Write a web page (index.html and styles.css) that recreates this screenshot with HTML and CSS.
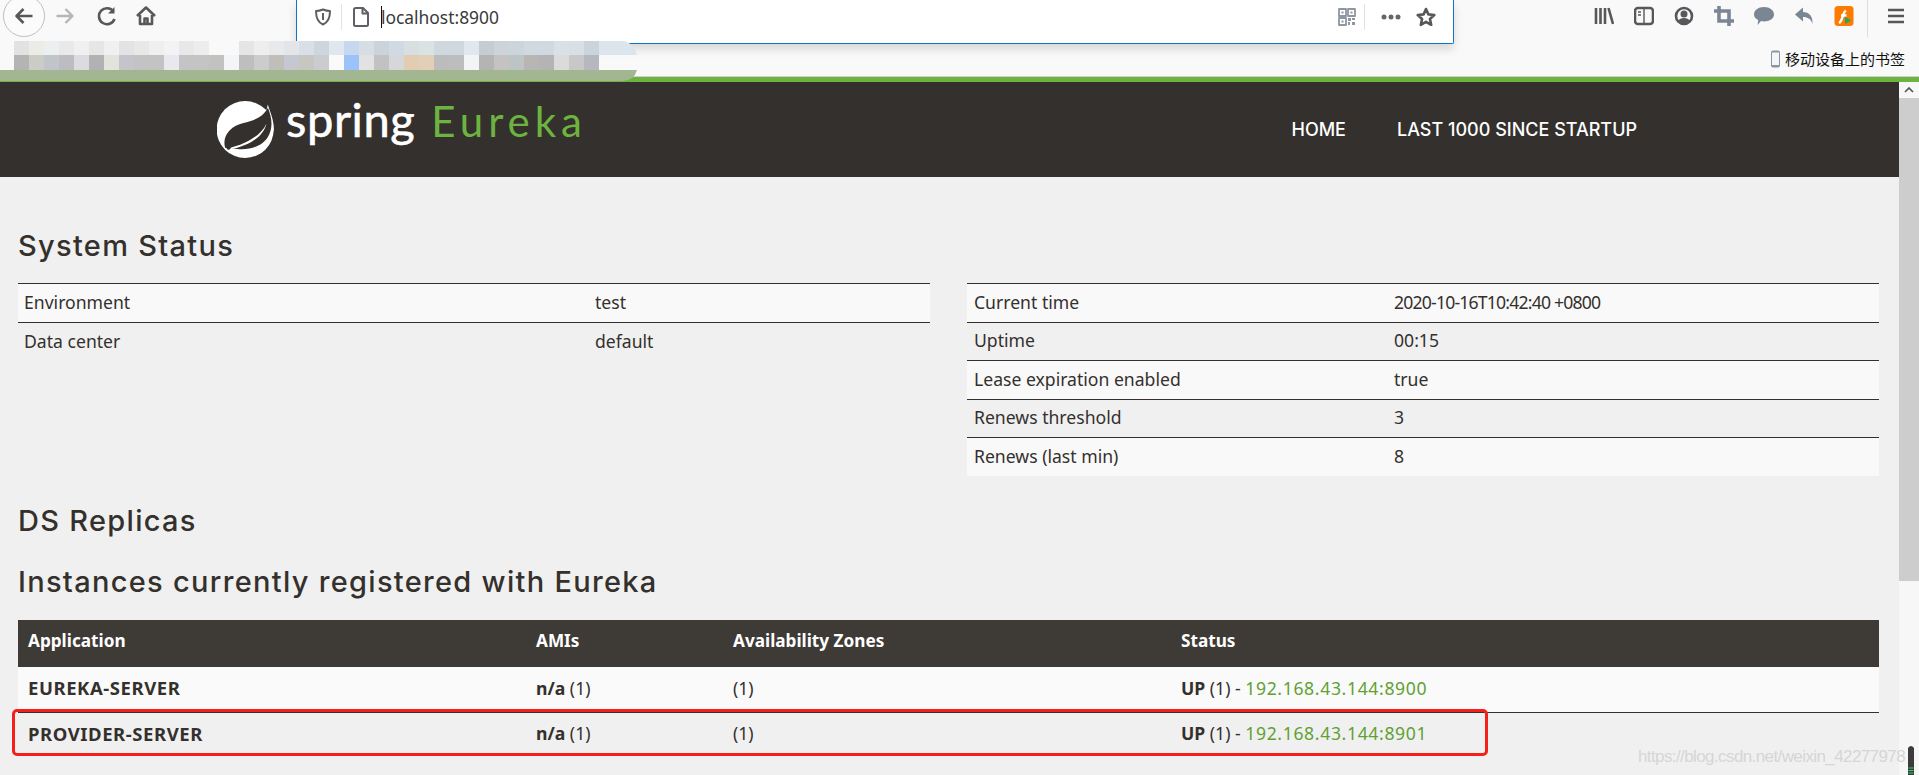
FILE: index.html
```html
<!DOCTYPE html>
<html lang="en">
<head>
<meta charset="utf-8">
<title>Eureka</title>
<link rel="stylesheet" href="styles.css">
</head>
<body>
<div class="chrome">
  <div class="toolbar">
    <div class="nav-icons">
      <span class="back-ring"><svg class="ic20" viewBox="0 0 20 20"><path d="M18.5 10H2.5M9.5 3L2.5 10L9.5 17" class="st-dark"/></svg></span>
      <svg class="ic20 fwd" viewBox="0 0 20 20"><path d="M1.5 10H17.5M10.5 3L17.5 10L10.5 17" class="st-light"/></svg>
      <svg class="ic20 reload" viewBox="0 0 20 20"><path d="M16.5 5.5A8 8 0 1 0 17.5 13" class="st-dark"/><path d="M17.5 1V7.5H11Z" class="fill-dark"/></svg>
      <svg class="ic20 home" viewBox="0 0 20 20"><path d="M1 10L10 1.5L19 10" class="st-dark"/><path d="M4 9V18H16V9M8.5 18V12.5H11.5V18" class="st-dark"/></svg>
    </div>
    <div class="urlbar">
      <svg class="ic18 shield" viewBox="0 0 18 18"><path d="M9 1.5C11.5 2.5 14 3 16 3C16 10 14 14.5 9 16.5C4 14.5 2 10 2 3C4 3 6.5 2.5 9 1.5Z" class="st-mid"/><path d="M9 5V12" class="st-mid"/></svg>
      <span class="vsep"></span>
      <svg class="ic20 doc" viewBox="0 0 20 20"><path d="M3 2.5A1.5 1.5 0 0 1 4.500 1H12L17 6V17.5A1.500 1.500 0 0 1 15.500 19H4.500A1.500 1.500 0 0 1 3 17.500ZM11.500 1.500V6.500H16.500" class="st-mid"/></svg>
      <span class="caret"></span>
      <span class="url">localhost:8900</span>
      <svg class="ic18 qr" viewBox="0 0 18 18"><path d="M1 1H8V8H1ZM10 1H17V8H10ZM1 10H8V17H1Z" class="st-qr"/><path d="M10 10H13V13H10ZM14 14H17V17H14ZM14 10H17V12H14ZM10 14H12V17H10ZM3.500 3.500H5.500V5.500H3.500ZM12.500 3.500H14.500V5.500H12.500ZM3.500 12.500H5.500V14.500H3.500Z" class="fill-qr"/></svg>
      <span class="vsep vsep-right"></span>
      <svg class="dots" viewBox="0 0 20 6"><circle cx="3" cy="3" r="2.500"/><circle cx="10" cy="3" r="2.500"/><circle cx="17" cy="3" r="2.500"/></svg>
      <svg class="ic20 star" viewBox="0 0 20 20"><path d="M10 2L12.400 7.400L18.300 8L13.900 12L15.200 17.800L10 14.800L4.800 17.800L6.100 12L1.700 8L7.600 7.400Z" class="st-dark"/></svg>
    </div>
    <div class="tool-icons">
      <svg class="ic20" viewBox="0 0 20 20"><path d="M2 2V18M6.500 2V18M11 2V18M14.500 2L19 18" class="st-dark"/></svg>
      <svg class="ic20" viewBox="0 0 20 20"><rect x="1" y="2" width="18" height="16" rx="3" class="st-dark"/><path d="M10 2V18M4 6H7M4 9H7" class="st-thin"/></svg>
      <svg class="ic20" viewBox="0 0 20 20"><circle cx="10" cy="10" r="8" class="st-dark"/><circle cx="10" cy="8" r="3.500" class="fill-dark"/><path d="M4 15C6 11 14 11 16 15L10 18Z" class="fill-dark"/></svg>
      <svg class="ic20" viewBox="0 0 20 20"><path d="M5 0V15H20M0 5H15V20" class="st-gray"/></svg>
      <svg class="ic20" viewBox="0 0 20 20"><path d="M10 1C15.800 1 20 4.200 20 8.500C20 12.500 15.800 15.500 10 15.500C9 15.500 8 15.400 7 15.100L3.500 19L4.200 14C1.800 12.800 0 10.800 0 8.500C0 4.200 4.200 1 10 1Z" class="fill-gray"/></svg>
      <svg class="ic20" viewBox="0 0 20 20"><path d="M9 1.500V6C15 6 19 10 18.500 18C17 13 14 11 9 11V15.500L1 8.500Z" class="fill-gray"/></svg>
      <svg class="ic20" viewBox="0 0 20 20"><rect x="0.500" y="0" width="19" height="20" rx="3.500" fill="#ff7a00"/><path d="M5 17C9 15 8 7 12 4.500M7 9.500H12.500" stroke="#fff" stroke-width="2.400" fill="none"/><path d="M11 10.500L17 14.500L11 18Z" fill="#20a860"/></svg>
      <span class="vsep vsep-tall"></span>
      <svg class="burger" viewBox="0 0 16 16"><path d="M0 2H16M0 8H16M0 14H16" class="st-dark"/></svg>
    </div>
  </div>
  <div class="bookmarks">
    <svg class="phone" viewBox="0 0 10 18"><rect x="0.500" y="0.500" width="9" height="17" rx="2" fill="#8b95a1"/><rect x="1.500" y="2.500" width="7" height="12.500" fill="#f4f6f8"/></svg>
    <span class="bm-text">移动设备上的书签</span>
  </div>
</div>
<div class="accent"></div>
<div class="viewport">
  <main class="page">
    <header class="navbar">
      <svg class="logo" viewBox="22 22 168 168">
        <circle cx="105" cy="106" r="84" fill="#fff"/>
        <path d="M150 10L195 10V60L185 60C178 50 176 42 172 36C165 40 158 30 150 10Z" fill="#34302d"/>
        <path d="M172 32C178 55 190 75 189 105C187 125 178 140 165 155L160 130L165 60Z" fill="#fff"/>
        <path d="M46 160C36 125 62 96 100 87C130 80 158 70 172 42C184 72 188 100 172 128C158 152 125 166 88 164C72 163 60 162 46 160Z" fill="#34302d"/>
        <path d="M62 160C100 150 150 128 168 88C160 124 120 154 62 164Z" fill="#fff"/>
        <circle cx="56" cy="160" r="6" fill="#34302d"/>
      </svg>
      <div class="brand"><span class="brand-spring">spring</span><span class="brand-eureka">Eureka</span></div>
      <nav class="menu"><a>HOME</a><a>LAST 1000 SINCE STARTUP</a></nav>
    </header>
    <section class="content">
      <h1 class="h-status">System Status</h1>
      <div class="two-col">
        <table class="kv kv-left">
          <tr><td class="k">Environment</td><td>test</td></tr>
          <tr><td class="k">Data center</td><td>default</td></tr>
        </table>
        <table class="kv kv-right">
          <tr><td class="k">Current time</td><td class="time">2020-10-16T10:42:40 +0800</td></tr>
          <tr><td class="k">Uptime</td><td>00:15</td></tr>
          <tr><td class="k">Lease expiration enabled</td><td>true</td></tr>
          <tr><td class="k">Renews threshold</td><td>3</td></tr>
          <tr><td class="k">Renews (last min)</td><td>8</td></tr>
        </table>
      </div>
      <h1 class="h-ds">DS Replicas</h1>
      <h1 class="h-inst">Instances currently registered with Eureka</h1>
      <table class="apps">
        <thead><tr><th class="c1">Application</th><th class="c2">AMIs</th><th class="c3">Availability Zones</th><th>Status</th></tr></thead>
        <tbody>
          <tr class="odd"><td><b class="name">EUREKA-SERVER</b></td><td><b>n/a</b> (1)</td><td>(1)</td><td><b>UP</b> (1) - <a class="ip">192.168.43.144:8900</a></td></tr>
          <tr><td><b class="name">PROVIDER-SERVER</b></td><td><b>n/a</b> (1)</td><td>(1)</td><td><b>UP</b> (1) - <a class="ip">192.168.43.144:8901</a></td></tr>
        </tbody>
      </table>
    </section>
  </main>
  <aside class="scrollbar">
    <div class="sb-arrow"><svg viewBox="0 0 10 6" class="sb-chev"><path d="M1 5L5 1L9 5" fill="none" stroke="#505050" stroke-width="1.600"/></svg></div>
    <div class="sb-thumb"></div>
  </aside>
</div>

<svg class="mosaic" viewBox="0 41 640 41" shape-rendering="crispEdges">
  <g>
    <path d="M0 70H637Q634 81 622 81H0Z" fill="#a3b692" shape-rendering="auto"/>
    <path d="M599 41H624Q634 43 637 55H599Z" fill="#dde5ec" shape-rendering="auto"/>
    <rect x="14" y="41" width="15" height="14" fill="#e2e2e2"/><rect x="29" y="41" width="15" height="14" fill="#ebebe8"/><rect x="44" y="41" width="15" height="14" fill="#eceef0"/><rect x="59" y="41" width="15" height="14" fill="#e8e9eb"/><rect x="74" y="41" width="15" height="14" fill="#f0f0f0"/><rect x="89" y="41" width="15" height="14" fill="#e6e6e6"/><rect x="104" y="41" width="15" height="14" fill="#f0f0f0"/><rect x="119" y="41" width="15" height="14" fill="#e3e3e6"/><rect x="134" y="41" width="15" height="14" fill="#e8e8e8"/><rect x="149" y="41" width="15" height="14" fill="#efefef"/><rect x="164" y="41" width="15" height="14" fill="#f3f3f5"/><rect x="179" y="41" width="15" height="14" fill="#e8e8e8"/><rect x="194" y="41" width="15" height="14" fill="#ededed"/>
    <rect x="239" y="41" width="15" height="14" fill="#e5e5e5"/><rect x="254" y="41" width="15" height="14" fill="#eeeeee"/><rect x="269" y="41" width="15" height="14" fill="#e8e9ea"/><rect x="284" y="41" width="15" height="14" fill="#e4e5e8"/><rect x="299" y="41" width="15" height="14" fill="#d8dfe6"/><rect x="314" y="41" width="15" height="14" fill="#cdd6df"/><rect x="329" y="41" width="15" height="14" fill="#e0e7ee"/><rect x="344" y="41" width="15" height="14" fill="#c6d8ee"/><rect x="359" y="41" width="15" height="14" fill="#d6dee4"/><rect x="374" y="41" width="15" height="14" fill="#cbd4dc"/><rect x="389" y="41" width="15" height="14" fill="#d0dae4"/><rect x="404" y="41" width="15" height="14" fill="#d9dfe1"/><rect x="419" y="41" width="15" height="14" fill="#dbe2e2"/><rect x="434" y="41" width="15" height="14" fill="#cfd8df"/><rect x="449" y="41" width="15" height="14" fill="#d0d8df"/><rect x="464" y="41" width="15" height="14" fill="#e0e7ee"/><rect x="479" y="41" width="15" height="14" fill="#c4ccd4"/><rect x="494" y="41" width="15" height="14" fill="#ccd4da"/><rect x="509" y="41" width="15" height="14" fill="#cdd5dc"/><rect x="524" y="41" width="15" height="14" fill="#d0d8e0"/><rect x="539" y="41" width="15" height="14" fill="#d0d9e0"/><rect x="554" y="41" width="15" height="14" fill="#d9e1e8"/><rect x="569" y="41" width="15" height="14" fill="#d8e0e6"/><rect x="584" y="41" width="15" height="14" fill="#cbd3dc"/>
    <rect x="14" y="55" width="15" height="15" fill="#b4b4b4"/><rect x="29" y="55" width="15" height="15" fill="#ccccc6"/><rect x="44" y="55" width="15" height="15" fill="#bfc5c8"/><rect x="59" y="55" width="15" height="15" fill="#bcbcc2"/><rect x="74" y="55" width="15" height="15" fill="#dcdce0"/><rect x="89" y="55" width="15" height="15" fill="#b2b2b2"/><rect x="104" y="55" width="15" height="15" fill="#e2e3dd"/><rect x="119" y="55" width="15" height="15" fill="#c4c4ca"/><rect x="134" y="55" width="15" height="15" fill="#c3c3c5"/><rect x="149" y="55" width="15" height="15" fill="#c3c3c3"/><rect x="164" y="55" width="15" height="15" fill="#e8e9ee"/><rect x="179" y="55" width="15" height="15" fill="#c4c4c4"/><rect x="194" y="55" width="15" height="15" fill="#c4c4c4"/><rect x="209" y="55" width="15" height="15" fill="#c2c2c0"/><rect x="224" y="55" width="15" height="15" fill="#f4f5f7"/><rect x="239" y="55" width="15" height="15" fill="#bebebe"/><rect x="254" y="55" width="15" height="15" fill="#cccccc"/><rect x="269" y="55" width="15" height="15" fill="#c0beb9"/><rect x="284" y="55" width="15" height="15" fill="#c5c8d0"/><rect x="299" y="55" width="15" height="15" fill="#c7c6c1"/><rect x="314" y="55" width="15" height="15" fill="#cbcccf"/><rect x="329" y="55" width="15" height="15" fill="#fafafa"/><rect x="344" y="55" width="15" height="15" fill="#9cc2fa"/><rect x="359" y="55" width="15" height="15" fill="#e2e2e2"/><rect x="374" y="55" width="15" height="15" fill="#c2c2c2"/><rect x="389" y="55" width="15" height="15" fill="#d6d7da"/><rect x="404" y="55" width="15" height="15" fill="#e2ccb2"/><rect x="419" y="55" width="15" height="15" fill="#e2cfb8"/><rect x="434" y="55" width="15" height="15" fill="#bcbcbc"/><rect x="449" y="55" width="15" height="15" fill="#bdbdbd"/><rect x="464" y="55" width="15" height="15" fill="#f3f4f6"/><rect x="479" y="55" width="15" height="15" fill="#b4b4b4"/><rect x="494" y="55" width="15" height="15" fill="#c4c3c1"/><rect x="509" y="55" width="15" height="15" fill="#bdc4c6"/><rect x="524" y="55" width="15" height="15" fill="#b8b6b2"/><rect x="539" y="55" width="15" height="15" fill="#b4b4b6"/><rect x="554" y="55" width="15" height="15" fill="#dcdbd9"/><rect x="569" y="55" width="15" height="15" fill="#c8c8c8"/><rect x="584" y="55" width="15" height="15" fill="#b6b8c0"/>
  </g>
</svg>
<div class="red-box"></div>
<div class="watermark">https://blog.csdn.net/weixin_42277978</div>
<svg class="nub" viewBox="0 0 8 30"><path d="M1 30V3Q4 -1 7 3V30Z" fill="#3c3c3c"/><path d="M1.500 23H6.500M1.500 25.500H6.500M1.500 28H6.500" stroke="#2fd060" stroke-width="1.200"/></svg>
</body>
</html>
```
FILE: styles.css
```css
* { box-sizing: border-box; }
html, body { margin: 0; height: 775px; overflow: hidden; }
body { position: relative; background: #f0f0f0; color: #34302d; font-family: "Noto Sans", "Open Sans", sans-serif; font-size: 17.6px; }

.chrome { height: 77px; background: #f9f9f9; border-bottom: 1px solid #cfcfcf; }
.toolbar { height: 41px; display: flex; align-items: flex-start; }
.nav-icons { width: 296px; display: flex; align-items: center; height: 32px; padding-left: 3px; flex: none; }
.back-ring { width: 42px; height: 42px; flex: none; margin-top: -1px; border: 1px solid #c0c0c0; border-radius: 50%; background: #fbfbfb; display: flex; align-items: center; justify-content: center; }
.ic20 { width: 20px; height: 20px; flex: none; }
.ic18 { width: 18px; height: 18px; flex: none; }
.fwd { margin-left: 10px; }
.reload { margin-left: 22px; }
.home { margin-left: 19px; }
.st-dark, .st-light, .st-mid, .st-gray, .st-qr, .st-thin { fill: none; stroke-linejoin: round; }
.st-dark { stroke: #58585c; stroke-width: 2.6; }
.st-light { stroke: #b6b6b6; stroke-width: 2.4; }
.st-mid { stroke: #606064; stroke-width: 2; }
.st-gray { stroke: #7b8694; stroke-width: 3.6; stroke-linejoin: miter; }
.st-qr { stroke: #8e96a0; stroke-width: 1.8; }
.st-thin { stroke: #58585c; stroke-width: 1.4; }
.fill-dark { fill: #58585c; }
.fill-gray { fill: #7b8694; }
.fill-qr { fill: #8e96a0; }

.urlbar { width: 1158px; height: 44px; flex: none; position: relative; z-index: 2; display: flex; align-items: center; background: #fff; border: 1px solid #1272c8; border-top: 0; border-radius: 0 0 2px 2px; padding: 0 0 9px 17px; box-shadow: 0 5px 10px rgba(0,0,0,.14); }
.vsep { width: 1px; height: 26px; background: #e2e2e2; flex: none; }
.shield { margin-right: 9px; }
.doc { margin-left: 9px; }
.caret { width: 1px; height: 22px; background: #111; margin-left: 10px; flex: none; }
.url { font-size: 17.4px; color: #3a3a3a; margin-left: -1px; font-family: "Noto Sans", sans-serif; }
.qr { margin-left: auto; }
.vsep-right { margin-left: 8px; }
.dots { width: 22px; height: 6px; margin-left: 15px; fill: #66666a; flex: none; }
.star { margin-left: 14px; margin-right: 17px; }

.tool-icons { flex: 1; height: 32px; display: flex; align-items: center; padding-left: 140px; gap: 20px; }
.vsep-tall { height: 37px; background: #dedede; margin-left: -7px; margin-top: 5px; }
.burger { width: 16px; height: 16px; flex: none; }

.bookmarks { height: 35px; display: flex; align-items: center; justify-content: flex-end; padding-right: 14px; gap: 4px; }
.phone { width: 11px; height: 18px; }
.bm-text { font-family: "Noto Sans CJK SC", sans-serif; font-size: 15px; color: #111; }

.accent { height: 5px; background: #6db33f; }
.viewport { display: flex; height: 693px; }
.page { flex: 1; min-width: 0; }
.navbar { height: 95px; background: #34302d; display: flex; align-items: center; padding: 0 262px 0 217px; }
.logo { width: 57px; height: 57px; flex: none; margin-top: -1px; }
.brand { margin-left: 12px; display: flex; align-items: baseline; color: #fff; margin-top: -22px; font-family: "Lato", sans-serif; }
.brand-spring { font-size: 47px; letter-spacing: 0.6px; -webkit-text-stroke: 0.6px #fff; }
.brand-eureka { font-size: 42px; color: #6db33f; letter-spacing: 5px; margin-left: 16px; }
.menu { margin-left: auto; display: flex; gap: 51px; color: #fff; font-family: "Inter", sans-serif; font-size: 18px; font-weight: 500; }

.content { padding: 0 20px 0 18px; }
h1 { margin: 0; font-family: "Inter", sans-serif; font-size: 29px; font-weight: 500; line-height: 36px; color: #34302d; letter-spacing: 1.3px; }
.h-status { padding-top: 51px; height: 106px; }
.two-col { display: grid; grid-template-columns: 912px 912px; column-gap: 37px; align-items: start; }
.kv { border-collapse: collapse; table-layout: fixed; width: 100%; }
.kv td { padding: 0 6px 2px; height: 38.500px; border-top: 1px solid #34302d; vertical-align: middle; }
.kv tr:nth-child(odd) td { background: #f9f9f9; }
.kv-left .k { width: 571px; }
.kv-right .k { width: 421px; padding-left: 7px; }
.time { letter-spacing: -0.8px; }
.h-ds { margin-top: 27px; }
.h-inst { margin-top: 25px; }
.apps { margin-top: 20px; width: 100%; border-collapse: collapse; table-layout: fixed; }
.apps th { height: 47px; background: #3e3a35; color: #fff; text-align: left; font-weight: 700; font-size: 17.2px; padding: 0 10px 7px; }
.apps td { height: 45px; padding: 0 10px 3px; }
.apps .c1 { width: 508px; }
.apps .c2 { width: 197px; }
.apps .c3 { width: 448px; }
.apps .odd td { background: #fafafa; border-bottom: 1px solid #34302d; }
.name { font-size: 18.5px; letter-spacing: 0.56px; }
.ip { color: #5fa134; letter-spacing: 0.64px; }

.scrollbar { width: 20px; flex: none; background: #f7f7f7; display: flex; flex-direction: column; }
.sb-arrow { height: 16px; display: flex; align-items: center; justify-content: center; }
.sb-chev { width: 10px; height: 6px; }
.sb-thumb { height: 483px; background: #cdcdcd; }

.mosaic { position: absolute; left: 0; top: 41px; width: 640px; height: 41px; z-index: 3; }
.red-box { position: absolute; left: 12px; top: 709px; width: 1476px; height: 47px; border: 3.5px solid #f5201a; border-radius: 5px; z-index: 4; }
.watermark { position: absolute; left: 1638px; top: 747px; font-family: "Liberation Sans", sans-serif; font-size: 17px; letter-spacing: -0.6px; color: #d6d6d6; z-index: 4; white-space: nowrap; }
.nub { position: absolute; left: 1907px; top: 745px; width: 8px; height: 30px; z-index: 5; }
```
